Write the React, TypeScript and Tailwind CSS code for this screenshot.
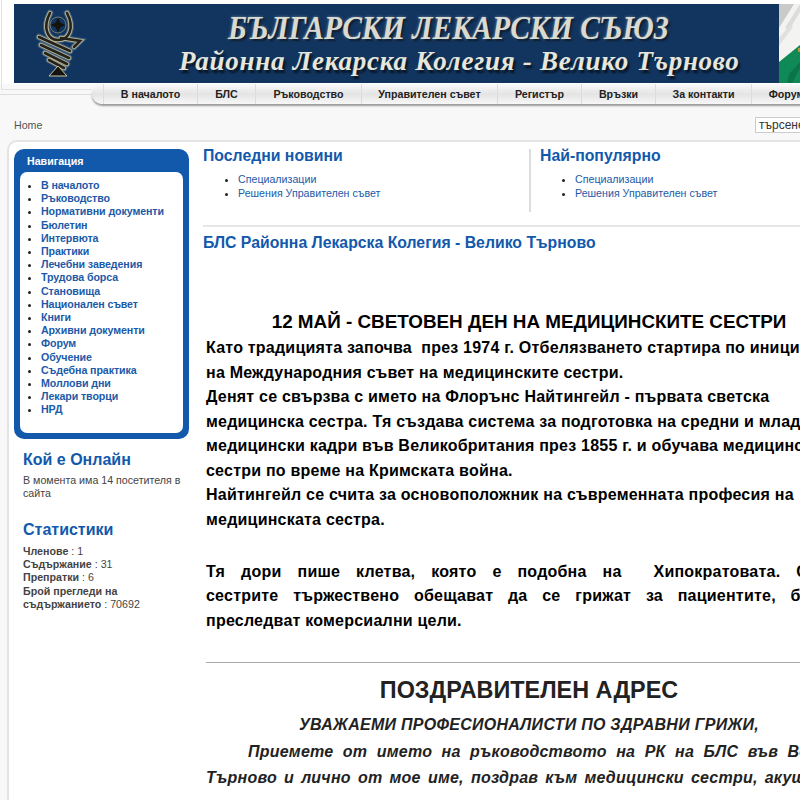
const sidebarLinks = [
  "В началото",
  "Ръководство",
  "Нормативни документи",
  "Бюлетин",
  "Интервюта",
  "Практики",
  "Лечебни заведения",
  "Трудова борса",
  "Становища",
  "Национален съвет",
  "Книги",
  "Архивни документи",
  "Форум",
  "Обучение",
  "Съдебна практика",
  "Моллови дни",
  "Лекари творци",
  "НРД",
];

const menuItems = [
  { label: "В началото", width: "w-[94px]" },
  { label: "БЛС", width: "w-[58px]" },
  { label: "Ръководство", width: "w-[106px]" },
  { label: "Управителен съвет", width: "w-[136px]" },
  { label: "Регистър", width: "w-[84px]" },
  { label: "Връзки", width: "w-[74px]" },
  { label: "За контакти", width: "w-[96px]" },
  { label: "Форум", width: "w-[70px]" },
];

const newsLinks = ["Специализации", "Решения Управителен съвет"];

const hornPath = "M16 9 C8 24 14 36 24 36 C35 36 41 24 33 9";
const coilPath = "M5 33 L36 47 M7 41 L35 54 M11 49 L33 60 M15 56 L30 64 M27 34 L46 37 L40 43";

function Logo() {
  return (
    <svg className="w-[54px] h-[76px] shrink-0" viewBox="0 0 54 76" fill="none">
      <g stroke="#5f7d96" strokeWidth="6.5" strokeLinecap="round" opacity="0.6">
        <path d={hornPath} />
        <path d={coilPath} />
      </g>
      <g stroke="#b6b394" strokeWidth="4.5" strokeLinecap="round">
        <path d={hornPath} />
        <path d={coilPath} />
      </g>
      <g stroke="#24221a" strokeWidth="2.6" strokeLinecap="round">
        <path d={hornPath} />
        <path d={coilPath} />
      </g>
      <circle cx="24" cy="21" r="8" fill="#12355f" stroke="#8d8a70" strokeWidth="0.8" />
      <path d="M24 14.5 L26 19 L30.5 21 L26 23 L24 27.5 L22 23 L17.5 21 L22 19 Z" fill="#15130f" stroke="#15130f" />
      <path d="M15 72 L24 62 L33 72 Z" fill="#15130f" stroke="#c8c5a4" strokeWidth="1" />
    </svg>
  );
}

function Flag() {
  return (
    <svg className="w-[21px] h-[79px] shrink-0" viewBox="0 0 21 79">
      <rect width="21" height="79" fill="#f3f3f1" />
      <path d="M0 0 L15 0 L0 24 Z" fill="#c9cbc9" />
      <path d="M21 0 L21 8 L10 26 L6 24 Z" fill="#dcdddb" />
      <path d="M0 34 L12 20 L14 23 L0 42 Z" fill="#e0e0de" />
      <path d="M0 58 L21 41 L21 79 L0 79 Z" fill="#0f8a57" />
      <path d="M10 70 L21 58 L21 64 L13 79 L8 79 Z" fill="#0b7448" />
      <rect x="19" y="44" width="2" height="4" fill="#b59a3a" />
    </svg>
  );
}

function Header() {
  return (
    <div className="h-[84px] pt-1 pl-[14px] flex">
      <div className="w-[765px] h-[79px] bg-[#12355f] flex pl-[20px]">
        <Logo />
        <div className="flex-1 flex flex-col items-start [font-family:'Liberation_Serif',serif] italic font-bold whitespace-nowrap text-[#d9dad2]">
          <div className="ml-[140px] origin-left scale-x-[0.896] text-[33px] leading-[38px] mt-[5px] [text-shadow:2px_2px_2px_#0b1a2c,0_0_3px_#7c90a4]">
            БЪЛГАРСКИ ЛЕКАРСКИ СЪЮЗ
          </div>
          <div className="ml-[91px] text-[27px] leading-[32px] mt-[-2px] tracking-[0.75px] text-[#e6e6dc] [text-shadow:2px_3px_2px_#081524]">
            Районна Лекарска Колегия - Велико Търново
          </div>
        </div>
      </div>
      <Flag />
    </div>
  );
}

function Menu() {
  return (
    <div className="h-[20px] ml-[92px] flex rounded-l-[10px] shadow-[0_2px_2px_#9a9a9a] bg-gradient-to-b from-[#fafafa] via-[#e4e4e4] to-[#f7f7f7] w-[800px]">
      <div className="w-[12px] shrink-0 border-r border-[#dcdcdc]" />
      {menuItems.map((item) => (
        <div
          key={item.label}
          className={`${item.width} shrink-0 border-r border-[#dcdcdc] flex items-center justify-center text-[10.67px] font-bold text-[#222]`}
        >
          {item.label}
        </div>
      ))}
    </div>
  );
}

function Sidebar() {
  return (
    <div className="w-[175px] shrink-0">
      <div className="bg-[#1259ac] rounded-[10px] px-[6px] pb-[6px]">
        <div className="text-white text-[10.67px] font-bold h-[23px] leading-[25px] pl-[7px]">Навигация</div>
        <ul className="bg-white rounded-[7px] pt-[7px] pb-[16px] pl-[21px] list-disc">
          {sidebarLinks.map((link) => (
            <li key={link} className="text-[10.67px] leading-[13.2px] font-bold tracking-[-0.1px] text-[#1c5aa8] marker:text-[#222]">
              {link}
            </li>
          ))}
        </ul>
      </div>
      <div className="pl-[9px] pt-[12px] text-[#444] text-[10.67px] leading-[13.2px]">
        <h3 className="text-[#1259ac] text-[16px] leading-[18px] font-bold mb-[5px]">Кой е Онлайн</h3>
        <p>В момента има 14 посетителя в сайта</p>
        <h3 className="text-[#1259ac] text-[16px] leading-[18px] font-bold mt-[21px] mb-[6px]">Статистики</h3>
        <p>
          <b>Членове</b> : 1
          <br />
          <b>Съдържание</b> : 31
          <br />
          <b>Препратки</b> : 6
          <br />
          <b>Брой прегледи на съдържанието</b> : 70692
        </p>
      </div>
    </div>
  );
}

function NewsColumn({ title }: { title: string }) {
  return (
    <div className="-mt-[2px]">
      <h3 className="text-[#1259ac] text-[15.8px] leading-[18px] font-bold">{title}</h3>
      <ul className="list-disc pl-[35px] mt-[8.4px] text-[10.67px] leading-[13.2px] text-[#1c5aa8] marker:text-[#222]">
        {newsLinks.map((link) => (
          <li key={link}>{link}</li>
        ))}
      </ul>
    </div>
  );
}

function Article() {
  return (
    <div className="w-[646px] ml-[3px] text-black font-bold text-[16px] leading-[24.5px] tracking-[0.22px]">
      <h2 className="text-center text-[18.85px] leading-[24px] mb-[2px] tracking-normal">12 МАЙ - СВЕТОВЕН ДЕН НА МЕДИЦИНСКИТЕ СЕСТРИ</h2>
      <div className="whitespace-nowrap">
        <p>Като традицията започва&nbsp; през 1974 г. Отбелязването стартира по инициатива</p>
        <p>на Международния съвет на медицинските сестри.</p>
        <p>Денят се свързва с името на Флорънс Найтингейл - първата светска</p>
        <p>медицинска сестра. Тя създава система за подготовка на средни и младши</p>
        <p>медицински кадри във Великобритания през 1855 г. и обучава медицински</p>
        <p>сестри по време на Кримската война.</p>
        <p>Найтингейл се счита за основоположник на съвременната професия на</p>
        <p>медицинската сестра.</p>
      </div>
      <div className="mt-[27.5px] whitespace-nowrap">
        <p className="[word-spacing:11.3px]">Тя дори пише клетва, която е подобна на&nbsp; Хипократовата. С нея</p>
        <p className="[word-spacing:10.1px]">сестрите тържествено обещават да се грижат за пациентите, без да</p>
        <p>преследват комерсиални цели.</p>
      </div>
      <hr className="border-[#aaa] mt-[29px]" />
      <h2 className="text-center text-[23.4px] leading-[28px] text-[#222] mt-[13px] tracking-normal">ПОЗДРАВИТЕЛЕН АДРЕС</h2>
      <p className="text-center italic text-[#222] mt-[9px] tracking-[0.27px]">УВАЖАЕМИ ПРОФЕСИОНАЛИСТИ ПО ЗДРАВНИ ГРИЖИ,</p>
      <div className="italic text-[#222] mt-[2px] whitespace-nowrap">
        <p className="pl-[42px] [word-spacing:4.8px]">Приемете от името на ръководството на РК на БЛС във Велико</p>
        <p className="mt-[1.5px] [word-spacing:2.5px]">Търново и лично от мое име, поздрав към медицински сестри, акушерки</p>
      </div>
    </div>
  );
}

export default function App() {
  return (
    <div className="w-[800px] h-[800px] overflow-hidden bg-[#f8f8f8] [font-family:'Liberation_Sans',Arial,sans-serif]">
      <div className="relative bg-white">
        <Header />
        <div className="absolute left-[1px] top-0 w-[91px] h-[90px] border-l border-b border-[#e2e2e2]" />
      </div>
      <div className="relative">
        <div className="absolute left-0 right-0 top-[10px] border-t border-[#dddddd]" />
        <div className="relative">
          <Menu />
        </div>
      </div>
      <div className="h-[36px] pt-[6px] flex items-center justify-between pl-[14px] text-[10.67px] text-[#555] overflow-hidden">
        <span>Home</span>
        <div className="w-[60px] h-[16px] mr-[-15px] border border-[#ccc] bg-white text-[12px] leading-[14px] pl-[3px] text-[#333] overflow-hidden whitespace-nowrap">
          търсене...
        </div>
      </div>
      <div className="ml-[7px] w-[900px] h-[660px] bg-white border-t-2 border-l-2 border-[#e4e4e4] rounded-tl-[10px] flex pl-[5px] pt-[7px]">
        <Sidebar />
        <div className="ml-[14px] flex-1">
          <div className="flex h-[63px]">
            <div className="w-[326px]">
              <NewsColumn title="Последни новини" />
            </div>
            <div className="border-l-2 border-[#ddd] pl-[9px] flex-1">
              <NewsColumn title="Най-популярно" />
            </div>
          </div>
          <div className="border-t-2 border-[#e6e6e6] mt-[13px] pt-[7px]">
            <h1 className="text-[#1259ac] text-[15.8px] leading-[18px] font-bold">
              БЛС Районна Лекарска Колегия - Велико Търново
            </h1>
          </div>
          <div className="mt-[58px]">
            <Article />
          </div>
        </div>
      </div>
    </div>
  );
}
